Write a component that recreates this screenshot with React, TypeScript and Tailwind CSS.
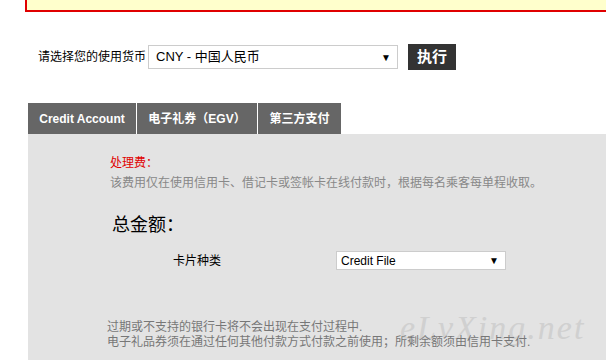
export default function App() {
  const font = { fontFamily: '"Liberation Sans", Arial, "Noto Sans CJK SC", sans-serif' };
  return (
    <div className="relative h-[360px] w-[606px] overflow-hidden bg-white text-[12px]" style={font}>
      {/* notice box, cut off at top */}
      <div className="ml-[25px] h-[12px] w-[600px] border-2 border-t-0 border-[#e00000] bg-[#ffffcc]" />

      {/* currency picker */}
      <div className="mt-[32px] flex items-center">
        <span className="ml-[38px] text-[12px] text-black">请选择您的使用货币</span>
        <div className="ml-[2px] flex h-[24px] w-[250px] items-center justify-between border border-[#cccccc] bg-white pl-[7px] pr-[6px] text-[13px] text-black">
          <span>CNY - 中国人民币</span>
          <span className="text-[10px]">▼</span>
        </div>
        <div className="ml-[10px] flex h-[26px] w-[48px] items-center justify-center bg-[#333333] text-[15px] font-bold text-white">
          执行
        </div>
      </div>

      {/* tabs */}
      <div className="ml-[28px] mt-[33px] flex h-[31px]">
        <div className="flex w-[108px] items-center justify-center bg-[#666666] font-bold text-white">Credit Account</div>
        <div className="ml-px flex w-[120px] items-center justify-center bg-[#666666] font-bold text-white">电子礼券（EGV）</div>
        <div className="ml-px flex w-[83px] items-center justify-center bg-[#666666] font-bold text-white">第三方支付</div>
      </div>

      {/* panel */}
      <div className="ml-[28px] h-[230px] bg-[#e3e3e3] pt-[20px]">
        <div className="ml-[82px] text-[12px] text-[#e00000]">处理费：</div>
        <div className="ml-[82px] mt-[2px] text-[12px] text-[#888888]">
          该费用仅在使用信用卡、借记卡或签帐卡在线付款时，根据每名乘客每单程收取。
        </div>
        <div className="ml-[84px] mt-[20px] text-[18px] text-black">总金额：</div>
        <div className="mt-[12px] flex items-center">
          <span className="ml-[145px] w-[163px] text-[12px] text-black">卡片种类</span>
          <div className="flex h-[19px] w-[170px] items-center justify-between border border-[#cccccc] bg-white pl-[4px] pr-[6px] text-[12px] text-black">
            <span>Credit File</span>
            <span className="text-[10px]">▼</span>
          </div>
        </div>
        <div className="relative z-10 ml-[79px] mt-[50px] text-[12px] leading-[15px] text-[#777777]">
          <div>过期或不支持的银行卡将不会出现在支付过程中.</div>
          <div>电子礼品券须在通过任何其他付款方式付款之前使用；所剩余额须由信用卡支付.</div>
        </div>
      </div>

      {/* watermark */}
      <div
        className="absolute left-[400px] top-[302px] text-[34px] italic tracking-[2px] text-[#c4c4c4] opacity-60"
        style={{ fontFamily: '"Liberation Serif", serif' }}
      >
        eLvXing.net
      </div>
    </div>
  );
}
